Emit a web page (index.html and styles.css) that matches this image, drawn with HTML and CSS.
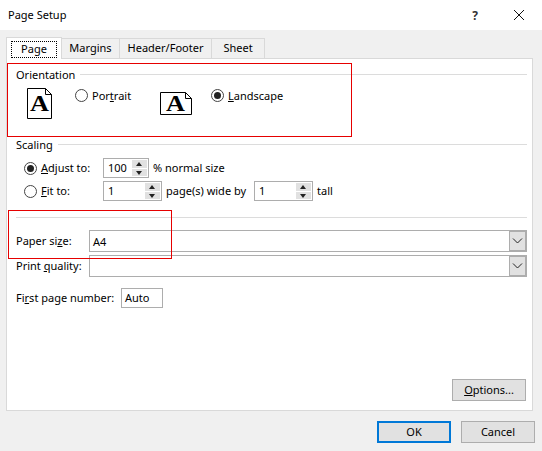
FILE: index.html
```html
<!DOCTYPE html>
<html lang="en">
<head>
    <meta charset="UTF-8">
    <title>Page Setup</title>
    <link rel="stylesheet" href="styles.css">
</head>
<body>
    <div class="dialog">
        <div class="titlebar">
            <span class="title">Page Setup</span>
            <span class="help">?</span>
            <svg class="close" width="12" height="12" viewBox="0 0 12 12"><path d="M1 1 L11 11 M11 1 L1 11" stroke="#111" fill="none"/></svg>
        </div>

        <div class="tabs">
            <div class="tab active"><span class="focus">Page</span></div>
            <div class="tab tab-margins">Margins</div>
            <div class="tab tab-header">Header/Footer</div>
            <div class="tab tab-sheet">Sheet</div>
        </div>

        <div class="panel">
            <div class="group-head"><span>Orientation</span><i></i></div>
            <div class="orientation">
                <svg class="page-icon icon-portrait" width="26" height="31" viewBox="0 0 26 31">
                    <path d="M.5 .5 H18.5 L24.5 6.5 V30.5 H.5 Z M18.5 .5 V6.5 H24.5" fill="#fff" stroke="#000"/>
                    <text x="3" y="23" class="page-letter" textLength="19" lengthAdjust="spacingAndGlyphs">A</text>
                </svg>
                <div class="radio"></div>
                <span class="radio-text">Por<u>t</u>rait</span>
                <svg class="page-icon icon-landscape" width="32" height="23" viewBox="0 0 32 23">
                    <path d="M.5 .5 H25.5 L31.5 6.5 V22.5 H.5 Z M25.5 .5 V6.5 H31.5" fill="#fff" stroke="#000"/>
                    <text x="6" y="19" class="page-letter" textLength="19" lengthAdjust="spacingAndGlyphs">A</text>
                </svg>
                <div class="radio checked"></div>
                <span class="radio-text"><u>L</u>andscape</span>
            </div>

            <div class="group-head"><span>Scaling</span><i></i></div>
            <div class="scale-row first">
                <div class="radio checked"></div>
                <span class="scale-label"><u>A</u>djust to:</span>
                <div class="spin w46"><span>100</span><div class="spin-btns"><b class="up"></b><b class="down"></b></div></div>
                <span class="after">% normal size</span>
            </div>
            <div class="scale-row">
                <div class="radio"></div>
                <span class="scale-label"><u>F</u>it to:</span>
                <div class="spin w59"><span>1</span><div class="spin-btns"><b class="up"></b><b class="down"></b></div></div>
                <span class="after wide-by">page(s) wide by</span>
                <div class="spin w59"><span>1</span><div class="spin-btns"><b class="up"></b><b class="down"></b></div></div>
                <span class="after">tall</span>
            </div>

            <div class="separator"></div>

            <div class="field-row">
                <label>Paper si<u>z</u>e:</label>
                <div class="combo"><span>A4</span><div class="combo-btn"><svg width="11" height="6" viewBox="0 0 11 6"><path d="M1 .5 L5.5 5 L10 .5" fill="none" stroke="#222"/></svg></div></div>
            </div>
            <div class="field-row second">
                <label>Print <u>q</u>uality:</label>
                <div class="combo"><span></span><div class="combo-btn"><svg width="11" height="6" viewBox="0 0 11 6"><path d="M1 .5 L5.5 5 L10 .5" fill="none" stroke="#222"/></svg></div></div>
            </div>
            <div class="first-page">
                <label>Fi<u>r</u>st page number:</label>
                <div class="text-box">Auto</div>
            </div>

            <button class="btn options"><u>O</u>ptions...</button>
        </div>

        <div class="footer">
            <button class="btn default">OK</button>
            <button class="btn">Cancel</button>
        </div>

        <div class="mark mark-orientation"></div>
        <div class="mark mark-paper"></div>
    </div>
</body>
</html>
```

FILE: styles.css
```css
* {
    box-sizing: border-box;
}

body {
    margin: 0;
    font-family: "Noto Sans", "Open Sans", sans-serif;
    font-size: 11px;
    color: #000;
    background-color: #f0f0f0;
}

.dialog {
    position: relative;
    width: 542px;
    height: 451px;
    overflow: hidden;
}

.titlebar {
    display: flex;
    align-items: center;
    height: 30px;
    padding-left: 8px;
    background-color: #fff;
}

.title {
    flex: 1;
    margin-bottom: 2px;
}

.help {
    margin-right: 35px;
    font-weight: bold;
    font-size: 12px;
    color: #333;
}

.close {
    margin-right: 17px;
}

.tabs {
    display: flex;
    align-items: flex-end;
    height: 28px;
    padding-left: 6px;
}

.tab {
    height: 20px;
    border: 1px solid #d9d9d9;
    border-bottom: none;
    border-left: none;
    background-color: #f0f0f0;
    text-align: center;
    line-height: 18px;
}

.tab.active {
    position: relative;
    z-index: 1;
    width: 56px;
    height: 22px;
    margin-bottom: -1px;
    padding: 3px 4px 0 4px;
    border-left: 1px solid #d9d9d9;
    background-color: #fff;
    line-height: 14px;
}

.focus {
    display: block;
    height: 17px;
    border: 1px dotted #000;
}

.tab-margins {
    width: 58px;
}

.tab-header {
    width: 92px;
}

.tab-sheet {
    width: 53px;
}

.panel {
    display: flex;
    flex-direction: column;
    width: 527px;
    height: 353px;
    margin-left: 6px;
    padding: 8px 5px 9px 9px;
    border: 1px solid #d9d9d9;
    background-color: #fff;
}

.group-head {
    display: flex;
    align-items: center;
    gap: 5px;
    height: 16px;
}

.group-head span {
    margin-bottom: 2px;
}

.group-head i {
    flex: 1;
    height: 1px;
    margin-top: -1px;
    background-color: #dcdcdc;
}

.orientation {
    display: flex;
    align-items: flex-start;
    height: 49px;
    margin-top: 5px;
    padding-left: 11px;
}

.page-icon {
    flex: none;
    overflow: visible;
}

.icon-portrait {
    margin-right: 22px;
}

.icon-landscape {
    margin: 4px 19px 0 0;
}

.page-letter {
    font-family: "Liberation Serif", serif;
    font-weight: bold;
    font-size: 23px;
    fill: #000;
}

.radio {
    flex: none;
    position: relative;
    width: 13px;
    height: 13px;
    border: 1px solid #444;
    border-radius: 50%;
    background-color: #fff;
}

.radio.checked::after {
    content: "";
    position: absolute;
    left: 2px;
    top: 2px;
    width: 7px;
    height: 7px;
    border-radius: 50%;
    background-color: #222;
}

.orientation .radio {
    margin-top: 1px;
}

.radio-text {
    flex: none;
    margin-left: 4px;
    width: 68px;
    line-height: 15px;
}

.scale-row {
    display: flex;
    align-items: center;
    height: 20px;
    margin-top: 3px;
    padding-left: 8px;
}

.scale-row.first {
    margin-top: 5px;
}

.scale-label {
    width: 62px;
    margin-left: 4px;
    margin-bottom: 2px;
}

.spin {
    display: flex;
    align-items: center;
    justify-content: space-between;
    height: 20px;
    padding: 0 1px 0 4px;
    border: 1px solid #adadad;
    background-color: #fff;
}

.spin span {
    margin-bottom: 2px;
}

.w46 {
    width: 46px;
}

.w59 {
    width: 59px;
}

.spin-btns {
    display: flex;
    flex-direction: column;
    gap: 1px;
    width: 15px;
    height: 16px;
}

.spin-btns b {
    flex: 1;
    position: relative;
    background-color: #e1e1e1;
}

.spin-btns b::after {
    content: "";
    position: absolute;
    left: 4px;
    top: 2px;
    border-left: 3.5px solid transparent;
    border-right: 3.5px solid transparent;
}

.spin-btns .up::after {
    border-bottom: 4px solid #222;
}

.spin-btns .down::after {
    border-top: 4px solid #222;
}

.after {
    margin-left: 4px;
    margin-bottom: 2px;
}

.wide-by {
    width: 88px;
}

.separator {
    height: 1px;
    margin-top: 16px;
    background-color: #dcdcdc;
}

.field-row {
    display: flex;
    align-items: center;
    margin-top: 12px;
}

.field-row.second {
    margin-top: 3px;
}

.field-row label {
    width: 73px;
    margin-bottom: 2px;
}

.combo {
    flex: 1;
    display: flex;
    align-items: center;
    height: 22px;
    padding-left: 3px;
    border: 1px solid #adadad;
    background-color: #fff;
}

.combo span {
    flex: 1;
}

.combo-btn {
    display: flex;
    align-items: center;
    justify-content: center;
    width: 17px;
    height: 20px;
    border: 1px solid #adadad;
    background-color: #e1e1e1;
}

.first-page {
    display: flex;
    align-items: center;
    margin-top: 11px;
}

.first-page label {
    width: 105px;
    margin-bottom: 2px;
    white-space: nowrap;
}

.text-box {
    width: 42px;
    height: 20px;
    padding-left: 3px;
    border: 1px solid #adadad;
    background-color: #fff;
    line-height: 18px;
}

.btn {
    width: 74px;
    height: 22px;
    padding: 0 0 2px 0;
    border: 1px solid #adadad;
    background-color: #e1e1e1;
    font-family: inherit;
    font-size: 11px;
    color: #000;
}

.options {
    align-self: flex-end;
    margin-top: auto;
    margin-right: 1px;
}

.footer {
    display: flex;
    justify-content: flex-end;
    gap: 10px;
    padding: 10px 7px 0 0;
}

.default {
    border: 2px solid #0078d7;
}

.mark {
    position: absolute;
    border: 1px solid #e60000;
}

.mark-orientation {
    left: 7px;
    top: 63px;
    width: 345px;
    height: 74px;
}

.mark-paper {
    left: 8px;
    top: 210px;
    width: 164px;
    height: 49px;
}
```
